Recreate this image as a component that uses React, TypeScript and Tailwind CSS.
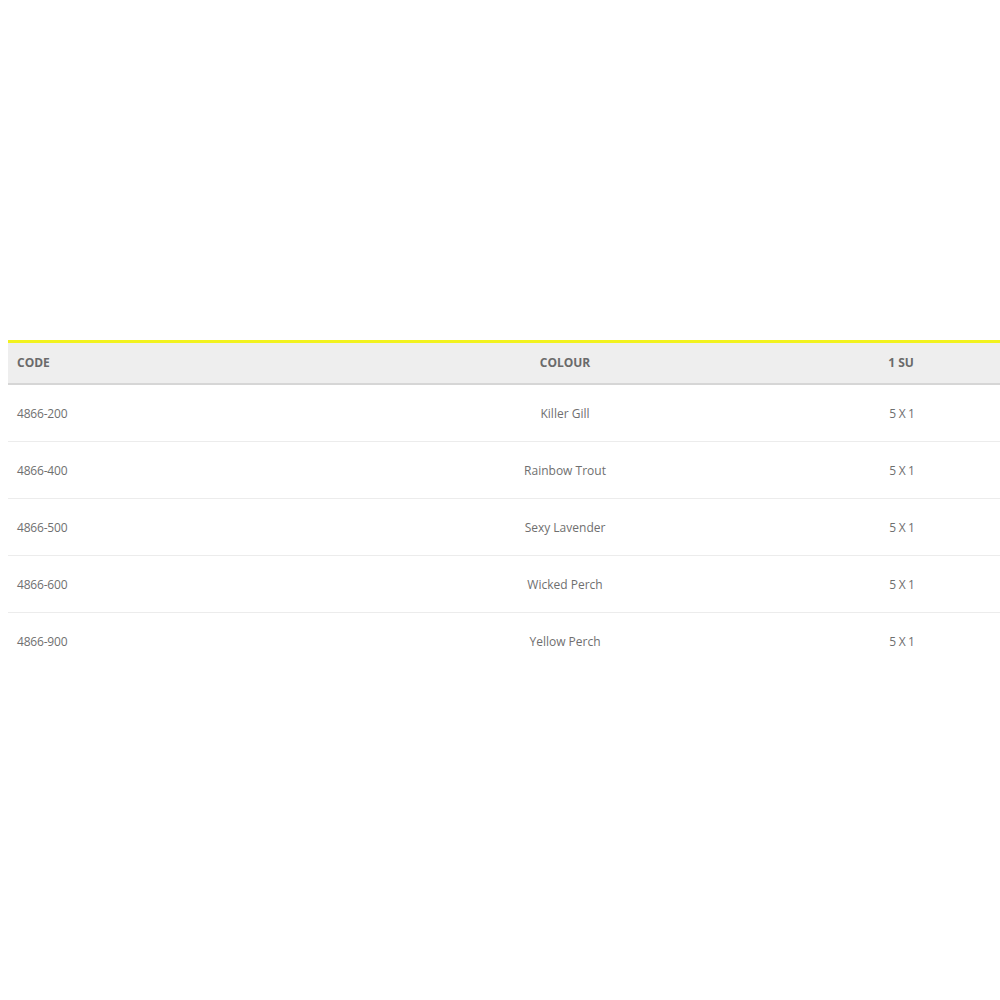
const rows = [
  { code: "4866-200", colour: "Killer Gill", su: "5 X 1" },
  { code: "4866-400", colour: "Rainbow Trout", su: "5 X 1" },
  { code: "4866-500", colour: "Sexy Lavender", su: "5 X 1" },
  { code: "4866-600", colour: "Wicked Perch", su: "5 X 1" },
  { code: "4866-900", colour: "Yellow Perch", su: "5 X 1" },
];

export default function App() {
  return (
    <main className="w-[1000px] h-[1000px] bg-white overflow-hidden pt-[340px] pl-2" style={{ fontFamily: '"Open Sans", sans-serif' }}>
      <div className="w-[1010px] border-t-[3px] border-[#f2f21e]">
        <div className="grid grid-cols-[330px_454px_218px] h-[42px] items-center bg-[#eeeeee] border-b-2 border-[#d6d6d6] text-[12px] font-bold text-[#6a6a6a]">
          <div className="pl-[9px]">CODE</div>
          <div className="text-center">COLOUR</div>
          <div className="text-center">1 SU</div>
        </div>
        {rows.map((r, i) => (
          <div
            key={r.code}
            className={
              "grid grid-cols-[330px_454px_218px] h-[57px] pt-[1px] items-center text-[12px] text-[#6f6f6f] " +
              (i < rows.length - 1 ? "border-b border-[#ececec]" : "")
            }
          >
            <div className="pl-[9px] tracking-[-0.2px]">{r.code}</div>
            <div className="text-center">{r.colour}</div>
            <div className="text-center pl-[2px] tracking-[-0.3px]">{r.su}</div>
          </div>
        ))}
      </div>
    </main>
  );
}
